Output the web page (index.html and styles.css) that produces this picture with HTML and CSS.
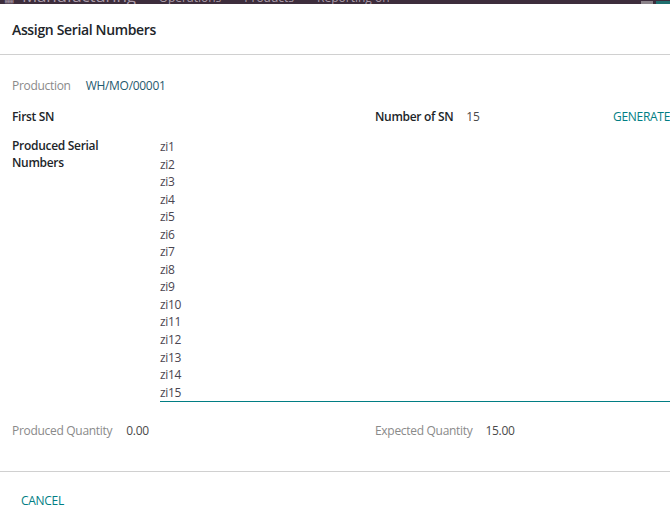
FILE: index.html
```html
<!DOCTYPE html>
<html>
<head>
<meta charset="utf-8">
<link rel="stylesheet" href="styles.css">
</head>
<body>
<div class="navbar">
  <span class="nav-apps">▦</span>
  <span class="nav-brand">Manufacturing</span>
  <span class="nav-item">Operations</span>
  <span class="nav-item">Products</span>
  <span class="nav-item">Reporting on</span>
  <span class="nav-right"><span class="avatar-a"></span><span class="avatar-b"></span></span>
</div>
<div class="modal">
  <header class="modal-header">
    <h4 class="modal-title">Assign Serial Numbers</h4>
  </header>
  <main class="modal-body">
    <div class="row-production">
      <span class="label-muted">Production</span>
      <span class="value-link">WH/MO/00001</span>
    </div>
    <div class="row-two">
      <div class="col">
        <span class="label-strong">First SN</span>
      </div>
      <div class="col col-right">
        <span class="label-strong">Number of SN</span>
        <span class="value">15</span>
        <span class="btn-link generate">GENERATE</span>
      </div>
    </div>
    <div class="row-serials">
      <div class="serial-label label-strong">Produced Serial<br>Numbers</div>
      <div class="serial-field">
        <div>zi1</div><div>zi2</div><div>zi3</div><div>zi4</div><div>zi5</div>
        <div>zi6</div><div>zi7</div><div>zi8</div><div>zi9</div><div>zi10</div>
        <div>zi11</div><div>zi12</div><div>zi13</div><div>zi14</div><div>zi15</div>
      </div>
    </div>
    <div class="row-two row-qty">
      <div class="col">
        <span class="label-muted">Produced Quantity</span>
        <span class="value">0.00</span>
      </div>
      <div class="col col-right">
        <span class="label-muted">Expected Quantity</span>
        <span class="value">15.00</span>
      </div>
    </div>
  </main>
  <footer class="modal-footer">
    <span class="btn-link cancel">CANCEL</span>
  </footer>
</div>
</body>
</html>
```
FILE: styles.css
```css
html, body {
  margin: 0;
  padding: 0;
  background: #ffffff;
}
body {
  font-family: "Open Sans", "Noto Sans", sans-serif;
  font-size: 12px;
  letter-spacing: -0.3px;
  color: #212529;
  width: 670px;
  height: 518px;
  overflow: hidden;
  position: relative;
}
.navbar {
  height: 4px;
  background: #3d2d3c;
  overflow: hidden;
  display: flex;
  align-items: flex-end;
  color: #a99aa8;
  font-size: 12px;
  line-height: 14px;
  letter-spacing: 0;
  position: relative;
}
.navbar span {
  margin-bottom: -1px;
}
.nav-apps { margin-left: 4px; font-size: 11px; }
.nav-brand { margin-left: 8px; font-size: 17px; line-height: 18px; letter-spacing: -0.2px; }
.nav-item { margin-left: 23px; }
.nav-right { margin-left: auto; display: flex; height: 4px; }
.avatar-a { width: 12px; height: 4px; background: #8a8289; margin-right: 3px; }
.avatar-b { width: 14px; height: 4px; background: #1f6f6f; }

.modal-header {
  height: 50px;
  display: flex;
  align-items: center;
  padding: 0 12px;
  border-bottom: 1px solid #d0d0d0;
}
.modal-title {
  margin: 0;
  font-size: 14px;
  font-weight: 600;
  color: #212529;
  letter-spacing: -0.35px;
}
.modal-body {
  padding: 20px 0 0 12px;
}
.label-muted { color: #8a8a8a; }
.label-strong { color: #212529; font-weight: 600; }
.value { color: #4a4a4a; }
.value-link { color: #1f5a6e; }
.row-production {
  display: flex;
  gap: 15px;
  height: 20px;
  align-items: center;
}
.row-two {
  display: flex;
  margin-top: 11px;
  height: 20px;
  align-items: center;
}
.col {
  width: 363px;
  flex-shrink: 0;
  display: flex;
  align-items: center;
  gap: 14px;
}
.col-right {
  flex: 1 1 auto;
  width: auto;
  gap: 13px;
}
.generate { margin-left: auto; }
.btn-link {
  color: #017e84;
  font-weight: 500;
}
.row-serials {
  display: flex;
  margin-top: 11px;
}
.serial-label {
  width: 148px;
  line-height: 17px;
}
.serial-field {
  flex: 1;
  line-height: 17.55px;
  padding-top: 1px;
  color: #4a4550;
  border-bottom: 1px solid #017e84;
}
.row-qty {
  margin-top: 18px;
}
.modal-footer {
  margin-top: 31px;
  border-top: 1px solid #d0d0d0;
  padding: 20px 21px;
}
```
